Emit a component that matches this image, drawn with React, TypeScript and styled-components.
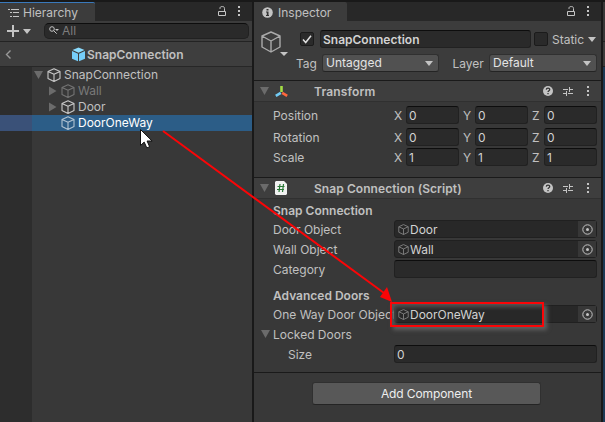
import React from "react";
import styled, { createGlobalStyle } from "styled-components";

const GlobalStyle = createGlobalStyle`
  *, *::before, *::after { box-sizing: border-box; }
  body { margin: 0; background: #191919; overflow: hidden; }
  svg { display: block; flex: none; }
`;

const Editor = styled.main`
  position: relative;
  width: 605px;
  height: 422px;
  padding-top: 2px;
  display: grid;
  grid-template-columns: 252px 347px 2px;
  column-gap: 2px;
  background: #191919;
  color: #c0c0c0;
  font: 12px/16px Inter, "Liberation Sans", sans-serif;
  white-space: nowrap;
  overflow: hidden;
`;

const Panel = styled.section`
  display: flex;
  flex-direction: column;
  min-width: 0;
  height: 420px;
  background: #383838;
`;

const TabBar = styled.header`
  display: flex;
  align-items: center;
  height: 19px;
  flex: none;
  background: #282828;
`;

const Tab = styled.div<{ $width: number; $active?: boolean }>`
  display: flex;
  align-items: center;
  gap: ${(p) => (p.$active ? 4 : 5)}px;
  width: ${(p) => p.$width}px;
  height: 19px;
  padding: 1px 0 0 8px;
  border-top: 1px solid ${(p) => (p.$active ? "#3a79bb" : "#3c3c3c")};
  border-radius: 0 2px 0 0;
  background: #3c3c3c;
`;

const BarActions = styled.div`
  display: flex;
  align-items: center;
  gap: 10px;
  margin-left: auto;
  padding-right: 11px;
`;

const Label = styled.span<{ $w?: number; $spacing?: number; $bold?: boolean; $dim?: boolean }>`
  flex: none;
  width: ${(p) => (p.$w ? `${p.$w}px` : "auto")};
  letter-spacing: ${(p) => p.$spacing ?? 0}px;
  font-weight: ${(p) => (p.$bold ? 600 : 400)};
  color: ${(p) => (p.$dim ? "#7a7a7a" : "inherit")};
`;

const Toolbar = styled.div`
  display: flex;
  align-items: center;
  flex: none;
  height: 21px;
  padding: 0 3px 1px 7px;
  background: #3c3c3c;
  border-bottom: 1px solid #232323;
`;

const SearchField = styled.div`
  display: flex;
  align-items: center;
  gap: 3px;
  width: 205px;
  height: 16px;
  margin-left: 13px;
  padding-left: 4px;
  border: 1px solid #212121;
  border-top-color: #0d0d0d;
  border-radius: 5px;
  background: #2a2a2a;
  color: #7d7d7d;
`;

const Breadcrumb = styled.div`
  display: flex;
  align-items: center;
  flex: none;
  height: 25px;
  padding: 1px 0 0 5px;
  border-bottom: 1px solid #272727;
  background: #3e3e3e;
`;

const Crumb = styled.div`
  display: flex;
  align-items: center;
  gap: 1px;
  margin-left: 59px;
`;

const Tree = styled.div`
  flex: 1;
  background: linear-gradient(90deg, #2d2d2d 32px, #383838 32px);
`;

const TreeRow = styled.div<{ $indent: number; $selected?: boolean }>`
  display: flex;
  align-items: center;
  gap: 3px;
  height: 16px;
  padding-left: ${(p) => p.$indent}px;
  color: ${(p) => (p.$selected ? "#fff" : "inherit")};
  background: ${(p) => (p.$selected ? "linear-gradient(90deg, #3a5178 32px, #2c5d87 32px)" : "none")};
  svg + svg { margin-left: 1px; }
`;

const ObjectHeader = styled.div`
  display: grid;
  grid-template-columns: 46px 1fr;
  flex: none;
  height: 60px;
  border-bottom: 1px solid #1a1a1a;
  background: #3c3c3c;
`;

const ObjectIcon = styled.div`
  padding: 10px 0 0 6px;
`;

const HeaderFields = styled.div`
  padding-top: 9px;
`;

const NameRow = styled.div`
  display: flex;
  align-items: center;
  height: 18px;
  gap: 3px;
  > span + span { margin-left: 1px; padding-top: 1px; }
`;

const TagRow = styled.div`
  display: flex;
  align-items: center;
  margin: 6px 0 0 -4px;
  height: 18px;
  > span { padding-top: 1px; }
`;

const Checkbox = styled.span`
  display: flex;
  align-items: center;
  justify-content: center;
  flex: none;
  width: 14px;
  height: 14px;
  border: 1px solid #1b1b1b;
  border-radius: 2px;
  background: #2a2a2a;
`;

const Input = styled.div<{ $width: number; $bold?: boolean; $start?: number }>`
  display: flex;
  align-items: center;
  flex: none;
  width: ${(p) => p.$width}px;
  height: 18px;
  margin-left: ${(p) => p.$start ?? 0}px;
  padding: 1px 0 0 2px;
  border: 1px solid #212121;
  border-top-color: #0d0d0d;
  border-radius: 3px;
  background: #2a2a2a;
  color: #d2d2d2;
  font-weight: ${(p) => (p.$bold ? 600 : 400)};
`;

const Dropdown = styled.div<{ $width: number }>`
  display: flex;
  align-items: center;
  justify-content: space-between;
  width: ${(p) => p.$width}px;
  height: 18px;
  padding: 0 5px 0 3px;
  border: 1px solid #303030;
  border-bottom-color: #242424;
  border-radius: 3px;
  background: #515151;
  color: #e4e4e4;
`;

const ComponentHeader = styled.div`
  display: flex;
  align-items: center;
  flex: none;
  height: 21px;
  padding-left: 6px;
  border-bottom: 1px solid #303030;
  background: #3e3e3e;
  > span { padding-top: 1px; }
`;

const TypeIcon = styled.div`
  width: 15px;
  margin: 0 24px 0 6px;
`;

const HeaderActions = styled.div`
  display: flex;
  align-items: center;
  gap: 10px;
  margin-left: auto;
  padding-right: 11px;
  svg:last-child { margin-left: 3px; }
`;

const TransformBody = styled.div`
  display: grid;
  grid-template-rows: 18px 18px 18px;
  row-gap: 2px;
  height: 76px;
  flex: none;
  padding-top: 4px;
  border-bottom: 1px solid #1a1a1a;
`;

const VectorRow = styled.div<{ $offset: number }>`
  display: flex;
  align-items: center;
  margin-top: ${(p) => p.$offset}px;
  height: 18px;
  padding-left: 19px;
  > span { padding-top: 1px; }
`;

const Axis = styled.label`
  display: flex;
  align-items: center;
  width: 69px;
  > span { width: 12px; padding-top: 1px; }
`;

const ScriptBody = styled.div`
  flex: none;
  height: 174px;
  padding-top: 4px;
  border-bottom: 1px solid #1a1a1a;
`;

const PropertyRow = styled.div<{ $indent?: number; $gap?: number }>`
  display: grid;
  grid-template-columns: 121px 203px;
  align-items: center;
  height: 18px;
  margin: 0 0 ${(p) => p.$gap ?? 2}px 19px;
  > span { padding: 1px 0 0 ${(p) => p.$indent ?? 0}px; }
  > div { position: relative; }
`;

const SectionTitle = styled.h3`
  height: 16px;
  margin: 0 0 1px 19px;
  font: inherit;
  font-weight: 600;
`;

const ObjectField = styled.div`
  display: flex;
  align-items: center;
  width: 203px;
  height: 18px;
  padding-left: 3px;
  border: 1px solid #202020;
  border-radius: 3px;
  background: #282828;
  color: #d2d2d2;
  gap: 1px;
  > span:first-of-type { padding-top: 1px; }
`;

const Picker = styled.div`
  display: grid;
  place-items: center;
  width: 18px;
  height: 16px;
  margin-left: auto;
  background: #373737;
`;

const Foldout = styled.div`
  display: flex;
  align-items: center;
  gap: 3px;
  height: 18px;
  margin: 0 0 2px 7px;
  > span { padding-top: 1px; }
`;

const AddButton = styled.button`
  width: 229px;
  height: 23px;
  margin: 9px 0 0 58px;
  padding: 0;
  border: 1px solid #303030;
  border-bottom-color: #242424;
  border-radius: 3px;
  background: #585858;
  color: #eee;
  font: inherit;
  letter-spacing: -0.1px;
`;

const SideStrip = styled.aside`
  height: 420px;
  background: linear-gradient(#383838 39px, #222 39px 40px, #3c3c3c 40px 64px, #222 64px 65px, #1c3954 65px);
`;

const HighlightBox = styled.div`
  position: absolute;
  left: 390px;
  top: 302px;
  width: 154px;
  height: 25px;
  border: 2px solid #fb0507;
  box-shadow: 3px 3px 4px #606060, inset 3px 3px 4px #555;
`;

const Annotation = styled.svg`
  position: absolute;
  left: 0;
  top: 0;
  pointer-events: none;
`;

const Cube = ({ size = 14, color = "#c8c8c8", weight = 1.1 }) => (
  <svg width={size} height={size} viewBox="0 0 14 14" fill="none" stroke={color} strokeWidth={weight} strokeLinejoin="round">
    <path d="M7 .7 13 3.5v7L7 13.4 1 10.5v-7zM1 3.5l6 2.8 6-2.8M7 6.3v7.1" />
  </svg>
);

const SolidCube = () => (
  <svg width="15" height="15" viewBox="0 0 15 15">
    <path d="m7.5.5 6 2.6-6 2.7-6-2.7z" fill="#8bdcff" />
    <path d="m1 4 6 2.7v7.6L1 11.7zM14 4 8 6.7v7.6l6-2.6z" fill="#75cefa" />
  </svg>
);

const Triangle = ({ right = false, color = "#6b6b6b", width = 9 }) => (
  <svg width={width} height={right ? 10 : (width * 8) / 9} viewBox={right ? "0 0 9 10" : "0 0 9 8"} fill={color}>
    <path d={right ? "M1 .5 8.5 5 1 9.5z" : "M0 0h9L4.5 8z"} />
  </svg>
);

const Caret = () => (
  <svg width="8" height="5" viewBox="0 0 8 5" fill="#c4c4c4"><path d="M0 0h8L4 5z" /></svg>
);

const Lock = () => (
  <svg width="9" height="11" viewBox="0 0 9 11" fill="none" stroke="#c4c4c4">
    <path d="M.5 5.5h7v4h-7zM2 3V2.2C2 1 2.8.6 4 .6h.6C6 .6 6.5 1.4 6.5 2.5v3" />
  </svg>
);

const Dots = () => (
  <svg width="4" height="11" viewBox="0 0 4 11" fill="#c4c4c4">
    <path d="M1 0h2v2H1zM1 4h2v2H1zM1 8h2v2H1z" />
  </svg>
);

const Actions = () => (
  <HeaderActions>
    <svg width="10" height="10" viewBox="0 0 10 10">
      <circle cx="5" cy="5" r="5" fill="#c4c4c4" />
      <path d="M3.3 3.6C3.4 1.6 6.8 1.7 6.7 3.7 6.6 4.7 5 4.7 5 6M5 7v1.3" fill="none" stroke="#333" strokeWidth="1.3" />
    </svg>
    <svg width="10" height="9" viewBox="0 0 10 9" fill="none" stroke="#c4c4c4">
      <path d="M0 2.5h5M7 2.5h3M6.5 0v5M0 6.5h3M5 6.5h5M3.5 4v5" />
    </svg>
    <Dots />
  </HeaderActions>
);

const PickerIcon = () => (
  <Picker>
    <svg width="11" height="11" viewBox="0 0 11 11"><circle cx="5.5" cy="5.5" r="4.7" fill="none" stroke="#c4c4c4" /><circle cx="5.5" cy="5.5" r="1.5" fill="#c4c4c4" /></svg>
  </Picker>
);

const vectors = [
  { name: "Position", value: "0", offset: 0 },
  { name: "Rotation", value: "0", offset: 2 },
  { name: "Scale", value: "1", offset: 2 },
];

const ReferenceRow = ({ name, value, gap }: { name: string; value: string; gap?: number }) => (
  <PropertyRow $gap={gap}>
    <span>{name}</span>
    <ObjectField><Cube size={11} color="#858585" /><span>{value}</span><PickerIcon /></ObjectField>
  </PropertyRow>
);

export default function App() {
  return (
    <>
      <GlobalStyle />
      <Editor>
        <Panel>
          <TabBar>
            <Tab $width={95} $active>
              <svg width="11" height="10" viewBox="0 0 11 10" fill="none" stroke="#c4c4c4">
                <path d="M0 1.5h2M3 1.5h8M2 4.5h2M5 4.5h6M2 8.5h2M5 8.5h6" />
              </svg>
              <Label>Hierarchy</Label>
            </Tab>
            <BarActions><Lock /><Dots /></BarActions>
          </TabBar>
          <Toolbar>
            <svg width="24" height="12" viewBox="0 0 24 12" fill="#c4c4c4"><path d="M5 0h2v5h5v2H7v5H5V7H0V5h5zM16 4h8l-4 5z" /></svg>
            <SearchField>
              <svg width="10" height="9" viewBox="0 0 10 9" fill="none" stroke="#c4c4c4"><circle cx="3" cy="3" r="2.3" /><path d="m4.7 4.7 3 3" /><path d="M6 3h4L8 5z" fill="#c4c4c4" stroke="none" /></svg>
              <Label>All</Label>
            </SearchField>
          </Toolbar>
          <Breadcrumb>
            <svg width="7" height="9" viewBox="0 0 7 9" fill="none" stroke="#999" strokeWidth="1.4"><path d="M5.5.5 1.5 4.5l4 4" /></svg>
            <Crumb><SolidCube /><Label $bold>SnapConnection</Label></Crumb>
          </Breadcrumb>
          <Tree>
            <TreeRow $indent={34}><Triangle /><Cube /><Label>SnapConnection</Label></TreeRow>
            <TreeRow $indent={48}><Triangle right /><Cube color="#737373" /><Label $dim>Wall</Label></TreeRow>
            <TreeRow $indent={48}><Triangle right /><Cube /><Label>Door</Label></TreeRow>
            <TreeRow $indent={61} $selected><Cube color="#b1c3d2" /><Label>DoorOneWay</Label></TreeRow>
          </Tree>
        </Panel>
        <Panel>
          <TabBar>
            <Tab $width={93}>
              <svg width="11" height="11" viewBox="0 0 11 11"><circle cx="5.5" cy="5.5" r="5.3" fill="#c4c4c4" /><path d="M4.5 2h2v1.5h-2zM4 4.5h2.5V8H7v1H4V8h.8V5.5H4z" fill="#333" /></svg>
              <Label>Inspector</Label>
            </Tab>
            <BarActions><Lock /><Dots /></BarActions>
          </TabBar>
          <ObjectHeader>
            <ObjectIcon>
              <svg width="28" height="26" viewBox="0 0 28 26" fill="none" stroke="#aaa" strokeWidth="1.4" strokeLinejoin="round">
                <path d="m11 1 9 4v11l-9 5-9-5V5zM2 5l9 5 9-5M11 10v11" />
                <path d="M20 21h8l-4 4z" fill="#c4c4c4" stroke="none" />
              </svg>
            </ObjectIcon>
            <HeaderFields>
              <NameRow>
                <Checkbox><svg width="10" height="9" viewBox="0 0 10 9" fill="none" stroke="#e0e0e0" strokeWidth="1.5"><path d="m1 4.5 2.7 3L9 .8" /></svg></Checkbox>
                <Input $width={211} $bold $start={3}>SnapConnection</Input>
                <Checkbox />
                <Label $w={33}>Static</Label>
                <Caret />
              </NameRow>
              <TagRow>
                <Label $w={26}>Tag</Label>
                <Dropdown $width={117}>Untagged<Caret /></Dropdown>
                <Label $w={50}>&nbsp;&nbsp;&nbsp; Layer</Label>
                <Dropdown $width={108}>Default<Caret /></Dropdown>
              </TagRow>
            </HeaderFields>
          </ObjectHeader>
          <ComponentHeader>
            <Triangle />
            <TypeIcon>
              <svg width="13" height="13" viewBox="0 0 13 13" strokeWidth="2.6">
                <path d="M6.5 1v6" stroke="#a5df45" /><path d="m5.8 7.8-5 3" stroke="#72cbf5" /><path d="m7.2 7.8 5 3" stroke="#ff683d" />
              </svg>
            </TypeIcon>
            <Label $bold $spacing={0.15}>Transform</Label><Actions />
          </ComponentHeader>
          <TransformBody>
            {vectors.map((v) => (
              <VectorRow key={v.name} $offset={v.offset}>
                <Label $w={121}>{v.name}</Label>
                {["X", "Y", "Z"].map((axis) => <Axis key={axis}><span>{axis}</span><Input $width={53}>{v.value}</Input></Axis>)}
              </VectorRow>
            ))}
          </TransformBody>
          <ComponentHeader>
            <Triangle />
            <TypeIcon>
              <svg width="12" height="14" viewBox="0 0 12 14"><path d="M1 0h8l3 3v10l-1 1H1l-1-1V1z" fill="#f1f1f1" /><path d="m5 3-1 8M8.5 3l-1 8M2.5 5.5h7M2 8.5h7" stroke="#287735" strokeWidth="1.2" /></svg>
            </TypeIcon>
            <Label $bold $spacing={0.07}>Snap Connection (Script)</Label><Actions />
          </ComponentHeader>
          <ScriptBody>
            <SectionTitle>Snap Connection</SectionTitle>
            <ReferenceRow name="Door Object" value="Door" />
            <ReferenceRow name="Wall Object" value="Wall" />
            <PropertyRow $gap={10}><span>Category</span><Input $width={203} /></PropertyRow>
            <SectionTitle>Advanced Doors</SectionTitle>
            <ReferenceRow name="One Way Door Object" value="DoorOneWay" />
            <Foldout><Triangle /><span>Locked Doors</span></Foldout>
            <PropertyRow $indent={15}><span>Size</span><Input $width={203}>0</Input></PropertyRow>
          </ScriptBody>
          <AddButton>Add Component</AddButton>
        </Panel>
        <SideStrip />
        <HighlightBox />
        <Annotation width="605" height="422" viewBox="0 0 605 422">
          <path d="M163 131 384 293" stroke="#fb0507" strokeWidth="2" />
          <path d="m392 302-12-5 7-10z" fill="#fb0507" />
          <path d="M140.5 129.5v16l3.7-3.4 2.6 5.8 2.8-1.2-2.5-5.7h5z" fill="#fff" stroke="#111" />
        </Annotation>
      </Editor>
    </>
  );
}
